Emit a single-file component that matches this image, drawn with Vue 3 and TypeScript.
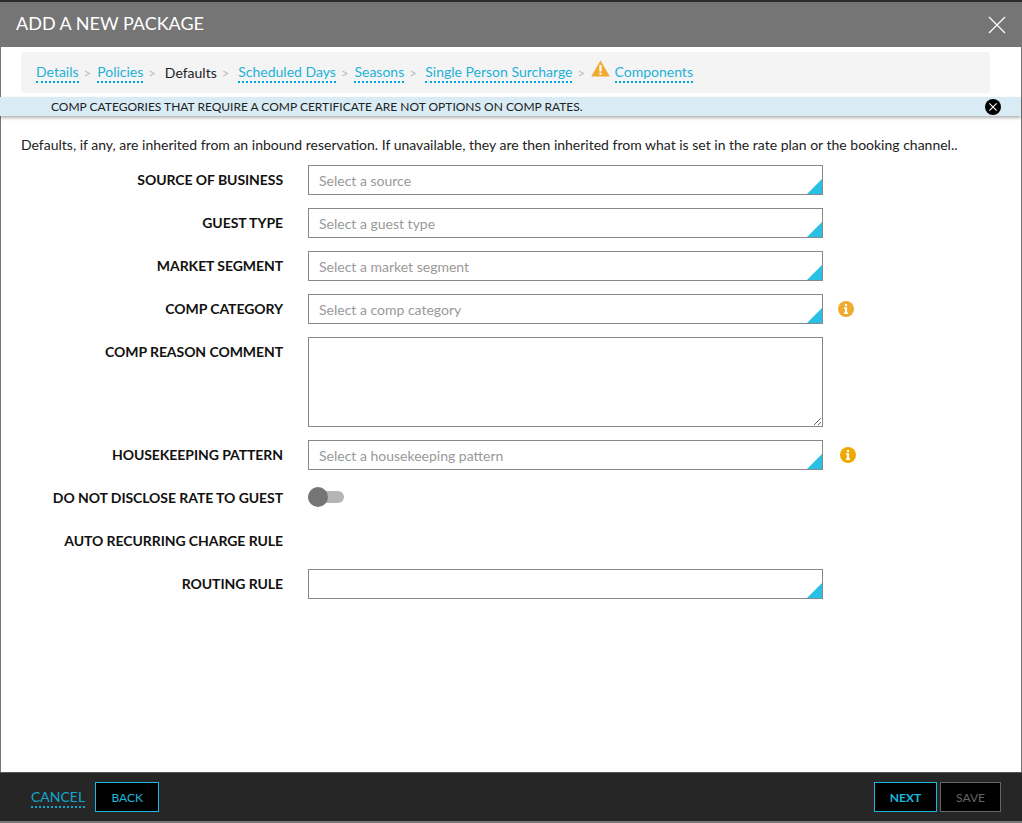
<script setup lang="ts">
interface Crumb { label: string; current?: boolean; warn?: boolean; extra?: number }
const crumbs: Crumb[] = [
  { label: 'Details' },
  { label: 'Policies' },
  { label: 'Defaults', current: true, extra: 3 },
  { label: 'Scheduled Days', extra: 3 },
  { label: 'Seasons' },
  { label: 'Single Person Surcharge', extra: 2.5 },
  { label: 'Components', warn: true },
]
interface Row { label: string; kind: 'select' | 'area' | 'toggle' | 'empty'; placeholder?: string; info?: number; infoColor?: string }
const rows: Row[] = [
  { label: 'SOURCE OF BUSINESS', kind: 'select', placeholder: 'Select a source' },
  { label: 'GUEST TYPE', kind: 'select', placeholder: 'Select a guest type' },
  { label: 'MARKET SEGMENT', kind: 'select', placeholder: 'Select a market segment' },
  { label: 'COMP CATEGORY', kind: 'select', placeholder: 'Select a comp category', info: 15, infoColor: '#efab30' },
  { label: 'COMP REASON COMMENT', kind: 'area' },
  { label: 'HOUSEKEEPING PATTERN', kind: 'select', placeholder: 'Select a housekeeping pattern', info: 17, infoColor: '#eeaa00' },
  { label: 'DO NOT DISCLOSE RATE TO GUEST', kind: 'toggle' },
  { label: 'AUTO RECURRING CHARGE RULE', kind: 'empty' },
  { label: 'ROUTING RULE', kind: 'select' },
]
</script>

<template>
  <div class="page">
    <div class="backdrop"></div>
    <div class="modal">
      <header class="head">
        <h1>ADD A NEW PACKAGE</h1>
        <svg class="close" width="18" height="18" viewBox="0 0 18 18" aria-label="Close">
          <path d="M1 1 L17 17 M17 1 L1 17" stroke="#fff" stroke-width="1.2" fill="none" />
        </svg>
      </header>

      <nav class="crumbs">
        <template v-for="(c, i) in crumbs" :key="c.label">
          <span v-if="i > 0" class="sep">&gt;</span>
          <svg v-if="c.warn" class="warn" width="19" height="17" viewBox="0 0 19 17">
            <path d="M9.5 0.5 L18.8 16.5 L0.2 16.5 Z" fill="#efaa2f" />
            <rect x="8.4" y="5" width="2.2" height="6.5" fill="#fff" />
            <rect x="8.4" y="12.6" width="2.2" height="2.2" fill="#fff" />
          </svg>
          <span v-if="c.current" class="current" :style="{ marginLeft: c.extra + 'px' }">{{ c.label }}</span>
          <a v-else class="link" :style="{ marginLeft: (c.extra ?? 0) + 'px' }">{{ c.label }}</a>
        </template>
      </nav>

      <div class="banner">
        <span>COMP CATEGORIES THAT REQUIRE A COMP CERTIFICATE ARE NOT OPTIONS ON COMP RATES.</span>
        <svg class="banner-x" width="16" height="16" viewBox="0 0 16 16">
          <circle cx="8" cy="8" r="8" fill="#000" />
          <path d="M4.4 4.4 L11.6 11.6 M11.6 4.4 L4.4 11.6" stroke="#fff" stroke-width="1.1" />
        </svg>
      </div>

      <p class="intro">Defaults, if any, are inherited from an inbound reservation. If unavailable, they are then inherited from what is set in the rate plan or the booking channel..</p>

      <main class="form">
        <div v-for="r in rows" :key="r.label" class="row" :class="{ 'row-area': r.kind === 'area' }">
          <label class="label">{{ r.label }}</label>
          <div v-if="r.kind === 'select'" class="select">
            <span class="placeholder">{{ r.placeholder }}</span>
            <i class="corner"></i>
          </div>
          <textarea v-else-if="r.kind === 'area'" class="area"></textarea>
          <div v-else-if="r.kind === 'toggle'" class="toggle"><i class="knob"></i></div>
          <svg v-if="r.info" class="info" :style="{ marginLeft: r.info + 'px' }" width="16" height="16" viewBox="0 0 16 16">
            <circle cx="8" cy="8" r="8" :fill="r.infoColor" />
            <rect x="6.9" y="3" width="2.2" height="2.2" fill="#fff" />
            <path d="M5.9 6.3 H9.1 V11.6 H10.1 V13 H5.9 V11.6 H6.9 V7.7 H5.9 Z" fill="#fff" />
          </svg>
        </div>
      </main>

      <footer class="foot">
        <a class="cancel">CANCEL</a>
        <button class="btn back">BACK</button>
        <span class="spacer"></span>
        <button class="btn next">NEXT</button>
        <button class="btn save" disabled>SAVE</button>
      </footer>
    </div>
  </div>
</template>

<style>
html, body { margin: 0; background: #fff; }
</style>

<style scoped>
.page {
  width: 1022px;
  height: 823px;
  display: flex;
  flex-direction: column;
  overflow: hidden;
  font-family: Lato, "Open Sans", sans-serif;
  background: #777;
}
.backdrop { height: 2px; background: #2b2b2b; flex: none; }
.modal {
  flex: 1;
  min-height: 0;
  margin-bottom: 2px;
  margin-left: 1px;
  margin-right: 1px;
  display: flex;
  flex-direction: column;
  background: #fff;
}
.head {
  height: 45px;
  flex: none;
  margin: 0 -1px;
  padding: 0 16px 4px 16px;
  box-sizing: border-box;
  background: #757575;
  display: flex;
  align-items: center;
  justify-content: space-between;
}
.head h1 {
  margin: 0;
  font-size: 18px;
  font-weight: 400;
  color: #fff;
}
.close { display: block; margin-top: 4px; }
.crumbs {
  height: 41px;
  box-sizing: border-box;
  margin: 5px 31px 0 20px;
  padding: 0 15px 0;
  background: #f4f4f4;
  border-radius: 4px;
  display: flex;
  align-items: center;
  font-size: 14px;
  flex: none;
}
.link {
  color: #1eb1d8;
  border-bottom: 2px dotted #00aad4;
  line-height: 18px;
}
.current { color: #222; }
.sep { color: #bbb; font-size: 13px; margin: 0 6px 0 5px; }
.warn { margin: -8px 4.5px 0 0; }
.banner {
  height: 19px;
  flex: none;
  margin-top: 4px;
  margin-left: -1px;
  padding: 0 21px 0 51px;
  background: #d9ecf5;
  box-shadow: 0 2px 3px rgba(0, 0, 0, 0.3);
  display: flex;
  align-items: center;
  justify-content: space-between;
  font-size: 12px;
  color: #222;
}
.banner-x { display: block; margin-right: -1px; }
.intro {
  margin: 20px 0 11px 20px;
  font-size: 14px;
  line-height: 18px;
  color: #222;
  white-space: nowrap;
  flex: none;
}
.form {
  display: flex;
  flex-direction: column;
  gap: 13px;
  flex: 1;
}
.row {
  display: flex;
  align-items: center;
  height: 30px;
}
.row-area { height: 90px; align-items: flex-start; }
.label {
  width: 282px;
  flex: none;
  text-align: right;
  margin-right: 25px;
  font-size: 14px;
  font-weight: 700;
  letter-spacing: -0.07px;
  color: #111;
  line-height: 30px;
  margin-top: 0;
}
.select {
  position: relative;
  box-sizing: border-box;
  width: 515px;
  height: 30px;
  border: 1px solid #888;
  background: #fff;
  display: flex;
  align-items: center;
  padding-left: 10px;
}
.placeholder { font-size: 14px; color: #999; }
.corner {
  position: absolute;
  right: 0;
  bottom: 0;
  width: 15px;
  height: 15px;
  background: #29c0e6;
  clip-path: polygon(100% 0, 100% 100%, 0 100%);
}
.area {
  box-sizing: border-box;
  width: 515px;
  height: 90px;
  border: 1px solid #888;
  border-radius: 0;
  margin: 0;
  padding: 0;
  outline: none;
  background: #fff;
}
.toggle {
  position: relative;
  width: 36px;
  height: 12px;
  margin-top: -3px;
  border-radius: 6px;
  background: #b5b5b5;
}
.knob {
  position: absolute;
  left: 0;
  top: -4px;
  width: 20px;
  height: 20px;
  border-radius: 50%;
  background: #757575;
}
.info { margin-top: -1px; flex: none; }
.foot {
  height: 49px;
  flex: none;
  margin: 0 -1px;
  box-sizing: border-box;
  padding: 0 21px 0 31px;
  border-top: 1px solid #555;
  background: #262626;
  display: flex;
  align-items: center;
}
.cancel {
  color: #12a5cc;
  font-size: 14px;
  border-bottom: 2px dotted #12a5cc;
  line-height: 18px;
  margin-right: 10px;
  margin-top: 2px;
}
.spacer { flex: 1; }
.btn {
  box-sizing: border-box;
  height: 30px;
  background: #000;
  font-family: inherit;
  font-size: 12px;
  padding: 0;
  border-radius: 0;
}
.back { width: 64px; border: 1px solid #1bb7dd; color: #1bb7dd; }
.next { width: 63px; border: 1px solid #1bb7dd; color: #1bb7dd; margin-right: 3px; font-weight: 700; }
.save { width: 61px; border: 1px solid #666; color: #666; }
</style>
